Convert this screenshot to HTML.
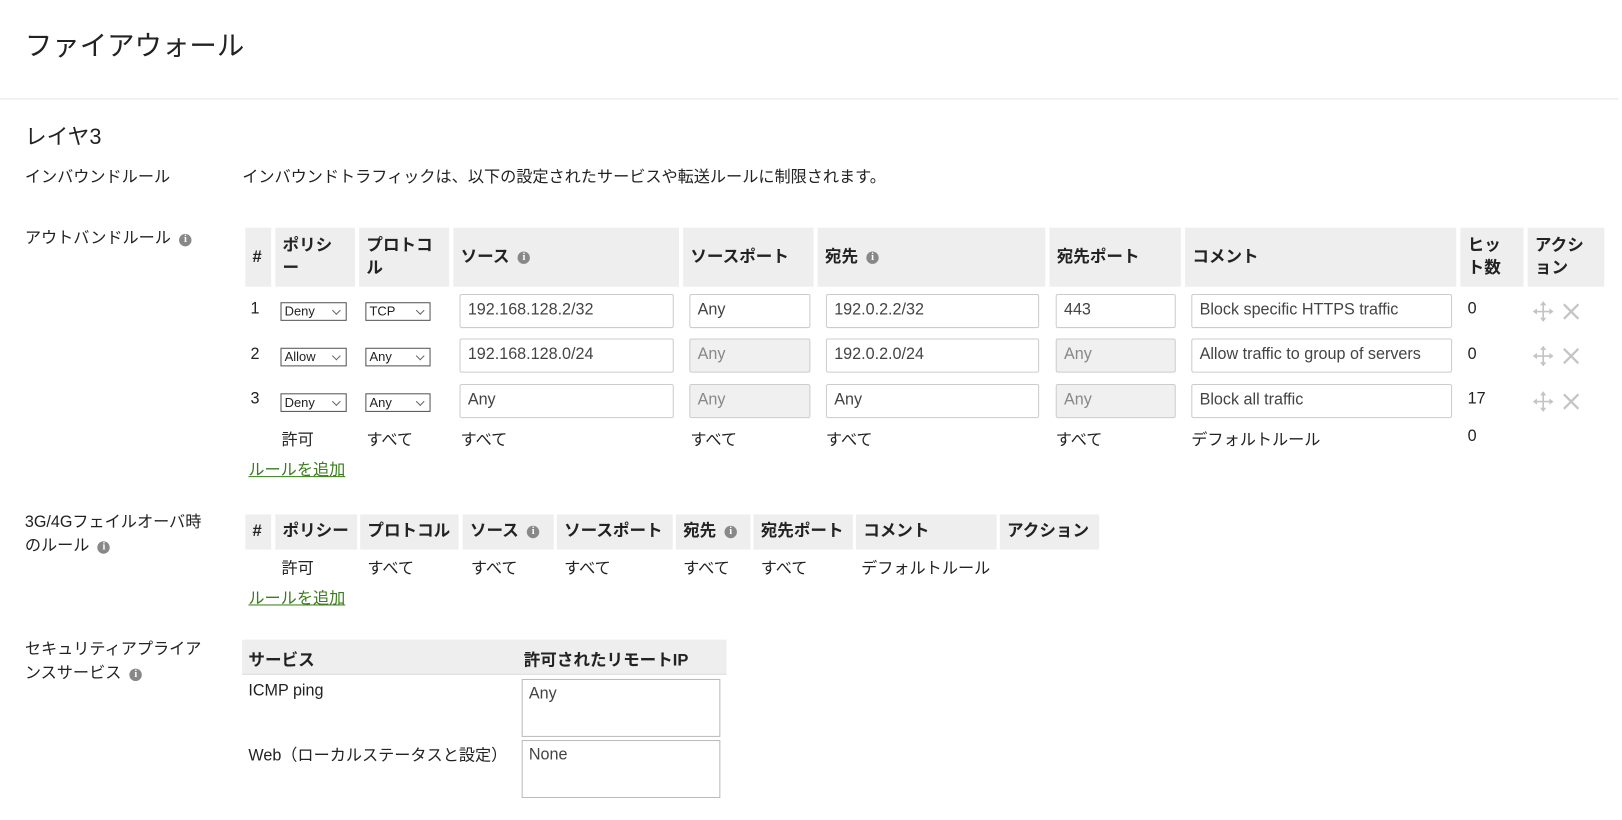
<!DOCTYPE html>
<html><head><meta charset="utf-8">
<style>
html,body{margin:0;padding:0;background:#fff;overflow:hidden;width:1622px;height:820px}
#w{position:absolute;left:0;top:0;width:1564px;height:791px;transform:scale(1.035);transform-origin:0 0;font-family:"Liberation Sans","Noto Sans CJK JP",sans-serif;color:#222;font-size:15.6px}
.a{position:absolute;white-space:nowrap}
.h{position:absolute;background:#eee;font-weight:bold;font-size:16px;line-height:22px;box-sizing:border-box;padding:0 7px;display:flex;align-items:center;white-space:normal;word-break:break-all}
.in{position:absolute;box-sizing:border-box;border:1px solid #ccc;border-radius:2px;background:#fff;color:#444;font-size:15.6px;line-height:29px;padding-left:7px;height:33px}
.dis{background:#f0f0f0;color:#888}
.sel{position:absolute;box-sizing:border-box;border:1px solid #555;background:#fff;font-size:12.5px;height:18px;line-height:16px;padding-left:3px}
.sel:after{content:"";position:absolute;right:6px;top:4px;width:5px;height:5px;border-right:1px solid #666;border-bottom:1px solid #666;transform:rotate(45deg)}
.i{display:inline-block;width:12px;height:12px;border-radius:50%;background:#888;color:#fff;font-size:10px;line-height:12px;text-align:center;font-weight:bold;font-family:"Liberation Serif",serif;vertical-align:1px;margin-left:8px}
.lnk{position:absolute;color:#3a7d1c;text-decoration:underline;font-size:15.6px}
.ta{position:absolute;box-sizing:border-box;border:1px solid #bbb;background:#fff;color:#444;font-size:15.6px;padding:5px 6px}
</style></head><body><div id="w">
<div class="a" style="left:24px;top:22px;font-size:26.5px;color:#222">ファイアウォール</div>
<div class="a" style="left:0;top:95px;width:1564px;height:1px;background:#e5e5e5"></div>
<div class="a" style="left:24px;top:116px;font-size:21px">レイヤ3</div>
<div class="a" style="left:24px;top:159px">インバウンドルール</div>
<div class="a" style="left:234px;top:159px">インバウンドトラフィックは、以下の設定されたサービスや転送ルールに制限されます。</div>
<div class="a" style="left:24px;top:218px">アウトバンドルール<span class="i">i</span></div>

<div class="h" style="left:237px;top:220px;width:25px;height:57px">#</div>
<div class="h" style="left:266px;top:220px;width:77px;height:57px">ポリシー</div>
<div class="h" style="left:347px;top:220px;width:87px;height:57px">プロトコル</div>
<div class="h" style="left:438px;top:220px;width:218px;height:57px">ソース<span class="i">i</span></div>
<div class="h" style="left:660px;top:220px;width:126px;height:57px">ソースポート</div>
<div class="h" style="left:790px;top:220px;width:220px;height:57px">宛先<span class="i">i</span></div>
<div class="h" style="left:1014px;top:220px;width:127px;height:57px">宛先ポート</div>
<div class="h" style="left:1145px;top:220px;width:262px;height:57px">コメント</div>
<div class="h" style="left:1411px;top:220px;width:61px;height:57px">ヒッ<br>ト数</div>
<div class="h" style="left:1476px;top:220px;width:74px;height:57px">アクシ<br>ョン</div>

<div class="a" style="left:242px;top:290px">1</div>
<div class="sel" style="left:271px;top:292px;width:64px">Deny</div>
<div class="sel" style="left:353px;top:292px;width:63px">TCP</div>
<div class="in" style="left:444px;top:284px;width:207px">192.168.128.2/32</div>
<div class="in" style="left:666px;top:284px;width:117px">Any</div>
<div class="in" style="left:798px;top:284px;width:206px">192.0.2.2/32</div>
<div class="in" style="left:1020px;top:284px;width:116px">443</div>
<div class="in" style="left:1151px;top:284px;width:252px">Block specific HTTPS traffic</div>
<div class="a" style="left:1418px;top:290px">0</div>

<div class="a" style="left:242px;top:334px">2</div>
<div class="sel" style="left:271px;top:336px;width:64px">Allow</div>
<div class="sel" style="left:353px;top:336px;width:63px">Any</div>
<div class="in" style="left:444px;top:327px;width:207px">192.168.128.0/24</div>
<div class="in dis" style="left:666px;top:327px;width:117px">Any</div>
<div class="in" style="left:798px;top:327px;width:206px">192.0.2.0/24</div>
<div class="in dis" style="left:1020px;top:327px;width:116px">Any</div>
<div class="in" style="left:1151px;top:327px;width:252px">Allow traffic to group of servers</div>
<div class="a" style="left:1418px;top:334px">0</div>

<div class="a" style="left:242px;top:377px">3</div>
<div class="sel" style="left:271px;top:380px;width:64px">Deny</div>
<div class="sel" style="left:353px;top:380px;width:63px">Any</div>
<div class="in" style="left:444px;top:371px;width:207px">Any</div>
<div class="in dis" style="left:666px;top:371px;width:117px">Any</div>
<div class="in" style="left:798px;top:371px;width:206px">Any</div>
<div class="in dis" style="left:1020px;top:371px;width:116px">Any</div>
<div class="in" style="left:1151px;top:371px;width:252px">Block all traffic</div>
<div class="a" style="left:1418px;top:377px">17</div>

<svg class="a" style="left:1481px;top:291px" width="48" height="110" viewBox="0 0 48 110">
<g stroke="#c4c4c4" stroke-width="1.6" fill="#c4c4c4">
<g><line x1="10" y1="1" x2="10" y2="19"/><line x1="1" y1="10" x2="19" y2="10"/>
<path d="M7 4 L10 0 L13 4Z M7 16 L10 20 L13 16Z M4 7 L0 10 L4 13Z M16 7 L20 10 L16 13Z" stroke="none"/></g>
<path d="M30 3 L44 17 M44 3 L30 17" stroke-width="2.2" fill="none"/>
<g transform="translate(0,43)"><line x1="10" y1="1" x2="10" y2="19"/><line x1="1" y1="10" x2="19" y2="10"/><path d="M7 4 L10 0 L13 4Z M7 16 L10 20 L13 16Z M4 7 L0 10 L4 13Z M16 7 L20 10 L16 13Z" stroke="none"/><path d="M30 3 L44 17 M44 3 L30 17" stroke-width="2.2" fill="none"/></g>
<g transform="translate(0,87)"><line x1="10" y1="1" x2="10" y2="19"/><line x1="1" y1="10" x2="19" y2="10"/><path d="M7 4 L10 0 L13 4Z M7 16 L10 20 L13 16Z M4 7 L0 10 L4 13Z M16 7 L20 10 L16 13Z" stroke="none"/><path d="M30 3 L44 17 M44 3 L30 17" stroke-width="2.2" fill="none"/></g>
</g></svg>

<div class="a" style="left:272px;top:413px">許可</div>
<div class="a" style="left:354px;top:413px">すべて</div>
<div class="a" style="left:445px;top:413px">すべて</div>
<div class="a" style="left:667px;top:413px">すべて</div>
<div class="a" style="left:798px;top:413px">すべて</div>
<div class="a" style="left:1020px;top:413px">すべて</div>
<div class="a" style="left:1151px;top:413px">デフォルトルール</div>
<div class="a" style="left:1418px;top:413px">0</div>
<div class="lnk" style="left:240px;top:442px">ルールを追加</div>

<div class="a" style="left:24px;top:493px;line-height:23px">3G/4Gフェイルオーバ時<br>のルール<span class="i">i</span></div>
<div class="h" style="left:237px;top:497px;width:25px;height:34px">#</div>
<div class="h" style="left:266px;top:497px;width:79px;height:34px">ポリシー</div>
<div class="h" style="left:348px;top:497px;width:95px;height:34px">プロトコル</div>
<div class="h" style="left:447px;top:497px;width:88px;height:34px">ソース<span class="i">i</span></div>
<div class="h" style="left:538px;top:497px;width:112px;height:34px">ソースポート</div>
<div class="h" style="left:653px;top:497px;width:72px;height:34px">宛先<span class="i">i</span></div>
<div class="h" style="left:728px;top:497px;width:96px;height:34px">宛先ポート</div>
<div class="h" style="left:827px;top:497px;width:136px;height:34px">コメント</div>
<div class="h" style="left:966px;top:497px;width:96px;height:34px">アクション</div>
<div class="a" style="left:272px;top:537px">許可</div>
<div class="a" style="left:355px;top:537px">すべて</div>
<div class="a" style="left:455px;top:537px">すべて</div>
<div class="a" style="left:545px;top:537px">すべて</div>
<div class="a" style="left:660px;top:537px">すべて</div>
<div class="a" style="left:735px;top:537px">すべて</div>
<div class="a" style="left:832px;top:537px">デフォルトルール</div>
<div class="lnk" style="left:240px;top:566px">ルールを追加</div>

<div class="a" style="left:24px;top:616px;line-height:23px">セキュリティアプライア<br>ンスサービス<span class="i">i</span></div>
<div class="a" style="left:234px;top:618px;width:468px;height:33px;background:#eee;border-bottom:1px solid #ddd"></div>
<div class="a" style="left:240px;top:624px;font-weight:bold;font-size:16px">サービス</div>
<div class="a" style="left:506px;top:624px;font-weight:bold;font-size:16px">許可されたリモートIP</div>
<div class="a" style="left:240px;top:659px">ICMP ping</div>
<div class="ta" style="left:504px;top:656px;width:192px;height:56px">Any</div>
<div class="a" style="left:240px;top:718px">Web（ローカルステータスと設定）</div>
<div class="ta" style="left:504px;top:715px;width:192px;height:56px">None</div>
</div></body></html>
